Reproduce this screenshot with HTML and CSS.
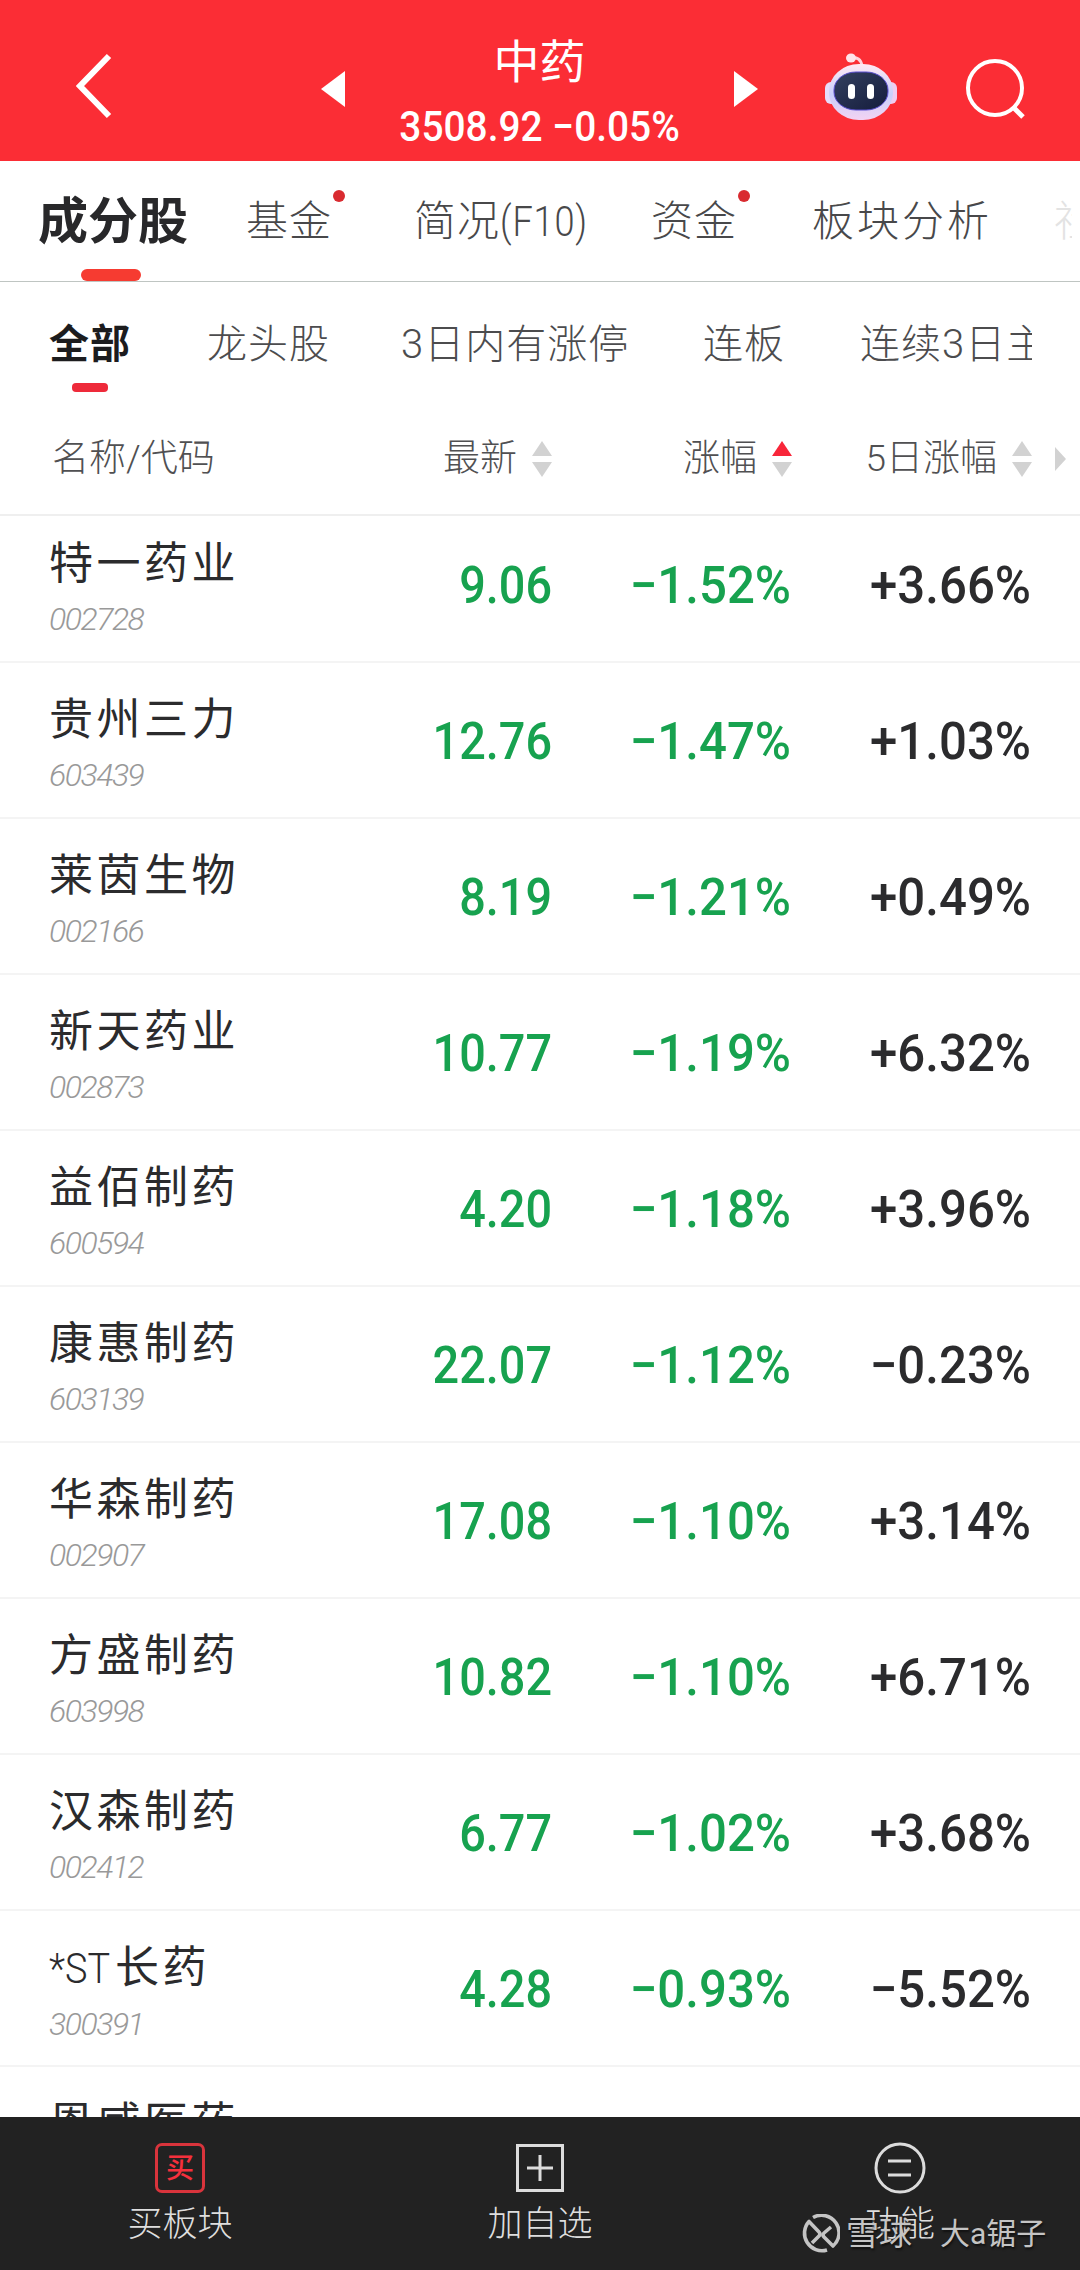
FILE: index.html
```html
<!DOCTYPE html>
<html lang="zh-CN">
<head>
    <meta charset="UTF-8">
    <meta name="viewport" content="width=device-width, initial-scale=1.0">
    <title>中药 - 成分股</title>
    <link rel="stylesheet" href="styles.css">
</head>
<body>
    <div class="page">
        <!-- 顶部标题栏 -->
        <header class="header">
            <svg class="back" width="36" height="66" viewBox="0 0 36 66"><path d="M33 3L4 33l29 30" fill="none" stroke="#fff" stroke-width="6"/></svg>
            <svg class="prev" width="24" height="36" viewBox="0 0 24 36"><path d="M24 0v36L0 18z" fill="#fff"/></svg>
            <div class="title">
                <h1>中药</h1>
                <p><span class="index">3508.92 −0.05%</span></p>
            </div>
            <svg class="next" width="24" height="36" viewBox="0 0 24 36"><path d="M0 0v36l24-18z" fill="#fff"/></svg>
            <svg class="robot" width="74" height="70" viewBox="0 0 74 70">
                <defs>
                    <linearGradient id="shell" x1="0" y1="0" x2="0" y2="1">
                        <stop offset="0" stop-color="#ffe9f3"/>
                        <stop offset=".55" stop-color="#c9cffb"/>
                        <stop offset="1" stop-color="#f3d3f3"/>
                    </linearGradient>
                    <linearGradient id="face" x1="0" y1="0" x2="1" y2="1">
                        <stop offset="0" stop-color="#34405f"/>
                        <stop offset="1" stop-color="#141c3c"/>
                    </linearGradient>
                </defs>
                <path d="M27 5c6-1 10 1 11 8" fill="none" stroke="#ffd3dc" stroke-width="3"/>
                <ellipse cx="27" cy="5" rx="5" ry="4.5" fill="#ffe3ea"/>
                <rect x="1" y="29" width="14" height="22" rx="6" fill="#e6dcfb"/>
                <rect x="59" y="29" width="14" height="22" rx="6" fill="#f0cdf0"/>
                <rect x="5" y="11" width="64" height="56" rx="30" ry="27" fill="url(#shell)"/>
                <rect x="10" y="19" width="54" height="38" rx="22" ry="18" fill="url(#face)" stroke="#5a4fd0" stroke-width="1"/>
                <rect x="24" y="31" width="7" height="15" rx="3.5" fill="#fff"/>
                <rect x="43" y="31" width="7" height="15" rx="3.5" fill="#fff"/>
            </svg>
            <svg class="search" width="62" height="62" viewBox="0 0 62 62"><g fill="none" stroke="#fff" stroke-width="4"><circle cx="30" cy="29" r="27"/><path d="M48 48l10 10" stroke-width="5"/></g></svg>
        </header>

        <nav class="tabs">
            <a class="tab active">成分股</a>
            <a class="tab dot">基金</a>
            <a class="tab">简况<span class="f10">(F10)</span></a>
            <a class="tab dot">资金</a>
            <a class="tab wide">板块分析</a>
            <a class="tab fade">社</a>
        </nav>

        <nav class="filters">
            <a class="filter active">全部</a>
            <a class="filter">龙头股</a>
            <a class="filter">3日内有涨停</a>
            <a class="filter">连板</a>
            <a class="filter">连续3日主力</a>
        </nav>

        <div class="thead">
            <span class="th-name">名称/代码</span>
            <span class="th">最新<i class="sort"></i></span>
            <span class="th">涨幅<i class="sort up"></i></span>
            <span class="th">5日涨幅<i class="sort"></i></span>
            <i class="more"></i>
        </div>

        <main class="list">
            <div class="row"><div class="stock"><b>特一药业</b><small>002728</small></div><span class="num down">9.06</span><span class="num pct down">−1.52%</span><span class="num pct">+3.66%</span></div>
            <div class="row"><div class="stock"><b>贵州三力</b><small>603439</small></div><span class="num down">12.76</span><span class="num pct down">−1.47%</span><span class="num pct">+1.03%</span></div>
            <div class="row"><div class="stock"><b>莱茵生物</b><small>002166</small></div><span class="num down">8.19</span><span class="num pct down">−1.21%</span><span class="num pct">+0.49%</span></div>
            <div class="row"><div class="stock"><b>新天药业</b><small>002873</small></div><span class="num down">10.77</span><span class="num pct down">−1.19%</span><span class="num pct">+6.32%</span></div>
            <div class="row"><div class="stock"><b>益佰制药</b><small>600594</small></div><span class="num down">4.20</span><span class="num pct down">−1.18%</span><span class="num pct">+3.96%</span></div>
            <div class="row"><div class="stock"><b>康惠制药</b><small>603139</small></div><span class="num down">22.07</span><span class="num pct down">−1.12%</span><span class="num pct">−0.23%</span></div>
            <div class="row"><div class="stock"><b>华森制药</b><small>002907</small></div><span class="num down">17.08</span><span class="num pct down">−1.10%</span><span class="num pct">+3.14%</span></div>
            <div class="row"><div class="stock"><b>方盛制药</b><small>603998</small></div><span class="num down">10.82</span><span class="num pct down">−1.10%</span><span class="num pct">+6.71%</span></div>
            <div class="row"><div class="stock"><b>汉森制药</b><small>002412</small></div><span class="num down">6.77</span><span class="num pct down">−1.02%</span><span class="num pct">+3.68%</span></div>
            <div class="row"><div class="stock"><b><span class="latin">*ST</span>长药</b><small>300391</small></div><span class="num down">4.28</span><span class="num pct down">−0.93%</span><span class="num pct">−5.52%</span></div>
            <div class="row"><div class="stock"><b>恩威医药</b></div></div>
        </main>

        <!-- 底部操作栏 -->
        <footer class="bar">
            <a class="action">
                <span class="buy">买</span>
                <span class="label">买板块</span>
            </a>
            <a class="action">
                <svg width="52" height="52" viewBox="0 0 52 52"><path d="M3.5 3.5h45v45h-45zM26 13v26M13 26h26" fill="none" stroke="#dcdcdc" stroke-width="3"/></svg>
                <span class="label">加自选</span>
            </a>
            <a class="action">
                <svg width="52" height="52" viewBox="0 0 52 52"><g fill="none" stroke="#dcdcdc" stroke-width="3"><circle cx="26" cy="26" r="24"/><path d="M14 19h23M14 33h23"/></g></svg>
                <span class="label">功能</span>
            </a>
        </footer>

        <div class="watermark">
            <svg width="40" height="40" viewBox="0 0 40 40"><g fill="none" stroke="#c4c4c4" stroke-width="3.6" stroke-linejoin="round"><path d="M12 29l7-7q2-2 0-4L9 7.500A17.500 17.500 0 0 0 27 36"/><path d="M31 13l-7 6q-2 2 0 4l9 9A17.500 17.500 0 0 0 13 3.500"/></g></svg>
            <span class="brand">雪球</span>
            <span class="sep">·</span>
            <span class="author">大a锯子</span>
        </div>
    </div>
</body>
</html>
```
FILE: styles.css
```css
* {
    box-sizing: border-box;
}
body {
    margin: 0;
    background: #fff;
    font-family: Roboto, "Noto Sans CJK SC", sans-serif;
    color: #2b2b2d;
}
.page {
    position: relative;
    width: 1080px;
    height: 2270px;
    overflow: hidden;
    display: flex;
    flex-direction: column;
}
svg {
    display: block;
    flex: none;
}

/* 顶部 */
.header {
    flex: none;
    height: 161px;
    padding: 0 53px 0 76px;
    background: #fb2d35;
    color: #fff;
    display: flex;
    align-items: flex-start;
}
.back {
    margin-top: 53px;
}
.prev {
    margin: 71px 0 0 209px;
}
.title {
    width: 390px;
    text-align: center;
}
.title h1 {
    margin: 34px 0 0;
    font-size: 46px;
    line-height: 56px;
    font-weight: 400;
}
.title p {
    margin: 12px 0 0;
    line-height: 50px;
    white-space: nowrap;
}
.index {
    display: inline-block;
    font-size: 42px;
    font-weight: 500;
    transform: scaleX(.925);
}
.next {
    margin-top: 71px;
}
.robot {
    margin: 53px 0 0 66px;
}
.search {
    margin: 59px 0 0 67px;
}

/* 一级标签 */
.tabs {
    flex: none;
    height: 121px;
    padding-left: 38px;
    border-bottom: 1px solid #bfc5c2;
    display: grid;
    grid-template-columns: 208px 168px 237px 161px 242px 18px;
    line-height: 122px;
    white-space: nowrap;
}
.tab {
    position: relative;
    height: 120px;
    font-size: 42px;
    font-weight: 300;
    letter-spacing: 1px;
    color: #48484a;
}
.tab.active {
    font-size: 50px;
    font-weight: 700;
    letter-spacing: 0;
    color: #28282a;
}
.tab.active::after {
    content: "";
    position: absolute;
    left: 43px;
    bottom: 0;
    width: 60px;
    height: 12px;
    border-radius: 6px;
    background: #f63b31;
}
.tab.dot::after {
    content: "";
    position: absolute;
    left: 87px;
    top: 29px;
    width: 12px;
    height: 12px;
    border-radius: 50%;
    background: #d92b30;
}
.f10 {
    display: inline-block;
    transform: scaleX(.86);
    transform-origin: left;
}
.tab.wide {
    letter-spacing: 3px;
}
.tab.fade {
    overflow: hidden;
    color: #e3e3e3;
}

/* 二级筛选 */
.filters {
    flex: none;
    height: 122px;
    margin-right: 48px;
    padding-left: 49px;
    overflow: hidden;
    display: grid;
    grid-template-columns: 158px 194px 302px 157px 172px;
    line-height: 125px;
    white-space: nowrap;
}
.filter {
    position: relative;
    font-size: 40px;
    font-weight: 300;
    letter-spacing: 1px;
    color: #4c4c4e;
}
.filter.active {
    font-weight: 700;
    color: #1c1c1e;
}
.filter.active::after {
    content: "";
    position: absolute;
    left: 23px;
    top: 101px;
    width: 36px;
    height: 9px;
    border-radius: 4px;
    background: #ee2a3a;
}

/* 表头 */
.thead {
    flex: none;
    height: 112px;
    padding: 0 14px 0 52px;
    border-bottom: 2px solid #efefef;
    display: grid;
    grid-template-columns: 290px 210px 240px 240px 34px;
    align-items: center;
    line-height: 108px;
    font-size: 37px;
    font-weight: 300;
    color: #505052;
    white-space: nowrap;
}
.th {
    display: flex;
    justify-content: flex-end;
    align-items: center;
}
.sort {
    width: 20px;
    margin-left: 15px;
}
.sort::before,
.sort::after {
    content: "";
    display: block;
    border: 10px solid transparent;
}
.sort::before {
    border-top: 0;
    border-bottom: 15px solid #d2d2d2;
    margin-bottom: 6px;
}
.sort::after {
    border-bottom: 0;
    border-top: 15px solid #d2d2d2;
}
.sort.up::before {
    border-bottom-color: #f8263a;
}
.more {
    justify-self: end;
    border: 12px solid transparent;
    border-right: 0;
    border-left: 11px solid #d2d2d2;
}

/* 列表，首行被表头遮住一部分 */
.list {
    flex: 1;
    min-height: 0;
    overflow: hidden;
}
.row {
    height: 156px;
    padding-left: 48px;
    border-bottom: 2px solid #f4f4f4;
    display: grid;
    grid-template-columns: 264px 240px 239px 240px;
    align-items: center;
}
.row:first-child {
    margin-top: -9px;
}
.stock {
    align-self: start;
    padding: 31px 0 0 1px;
}
.stock b {
    display: block;
    font-size: 44px;
    line-height: 52px;
    font-weight: 400;
    letter-spacing: 3.500px;
}
.latin {
    display: inline-block;
    width: 66px;
    font-size: 42px;
    font-weight: 300;
    letter-spacing: 0;
    transform: scaleX(.9);
    transform-origin: left;
}
.stock small {
    display: block;
    margin-top: 10px;
    font-size: 32px;
    line-height: 38px;
    font-weight: 300;
    font-style: italic;
    letter-spacing: -1.500px;
    color: #999;
}
.num {
    padding-top: 2px;
    font-size: 52px;
    font-weight: 500;
    text-align: right;
    transform: scaleX(.9);
    transform-origin: right;
}
.num.pct {
    transform: scaleX(.945);
}
.down {
    color: #17a24f;
}

/* 底部 */
.bar {
    flex: none;
    height: 153px;
    background: #222;
    display: grid;
    grid-template-columns: repeat(3, 1fr);
}
.action {
    display: flex;
    flex-direction: column;
    align-items: center;
    padding-top: 25px;
    color: #dedede;
}
.buy {
    width: 50px;
    height: 50px;
    margin: 1px 0;
    border: 3px solid #d9343c;
    border-radius: 7px;
    font-size: 28px;
    line-height: 45px;
    font-weight: 500;
    text-align: center;
    color: #f5303c;
}
.label {
    margin-top: 9px;
    font-size: 35px;
    line-height: 44px;
    font-weight: 300;
}

.watermark {
    position: absolute;
    left: 800px;
    top: 2214px;
    display: flex;
    align-items: center;
    line-height: 40px;
    font-size: 33px;
    color: #c4c4c4;
    text-shadow: 1px 2px 2px #111;
}
.brand {
    margin-left: 6px;
}
.sep {
    width: 28px;
    text-align: center;
}
.author {
    font-size: 30px;
}
```
